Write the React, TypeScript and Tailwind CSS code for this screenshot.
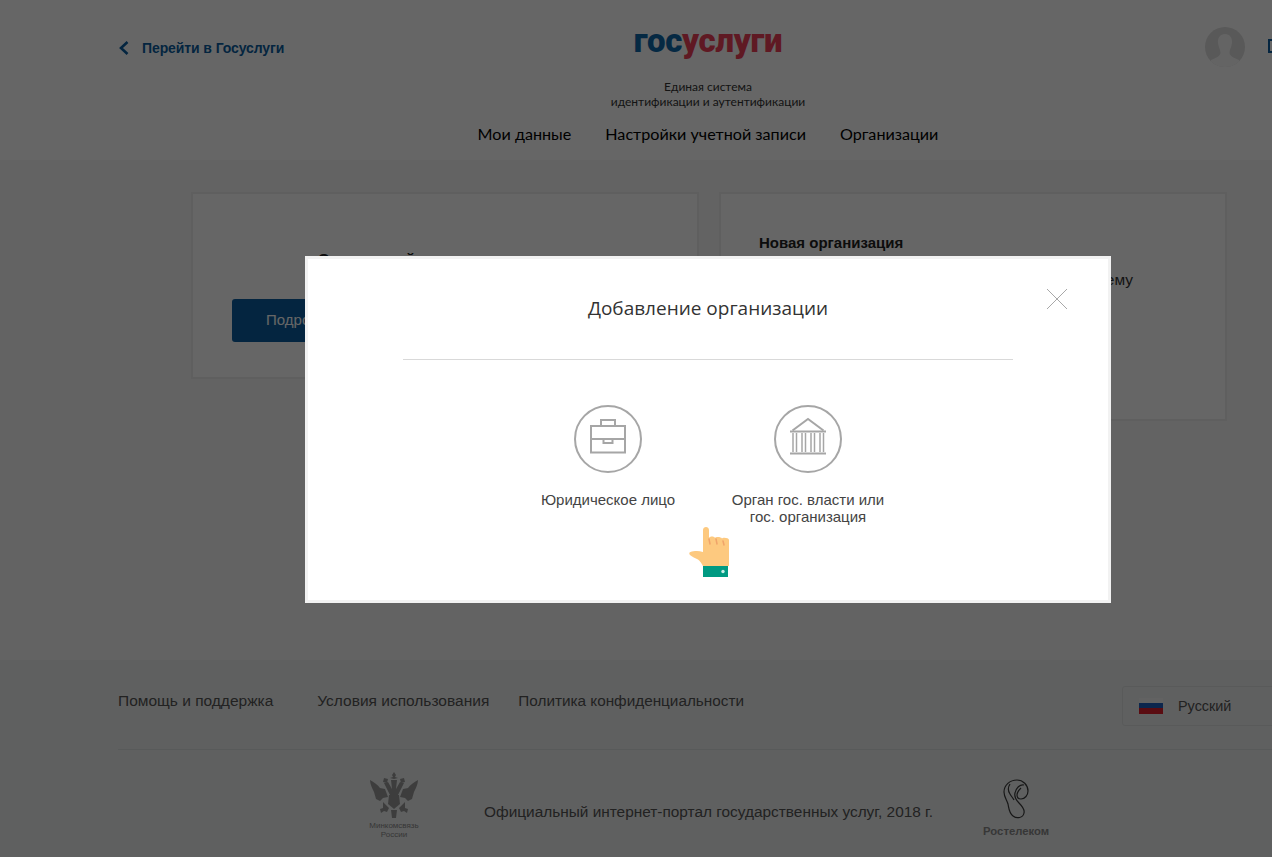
// gosuslugi profile page with the "add organization" dialog on top

function Avatar() {
  return (
    <svg width="40" height="40" viewBox="0 0 40 40">
      <defs>
        <clipPath id="avatar-clip">
          <circle cx="20" cy="20" r="20" />
        </clipPath>
      </defs>
      <circle cx="20" cy="20" r="20" fill="#dedede" />
      <g clipPath="url(#avatar-clip)" fill="#fafafa">
        <path d="M20 7c-5 0-7.500 4-7 9 .3 4 2.500 6.500 2.500 10 0 3-5 5-9.500 7v7h28v-7c-4.500-2-9.500-4-9.500-7 0-3.500 2.200-6 2.500-10 .5-5-2-9-7-9z" />
      </g>
    </svg>
  )
}

function Briefcase() {
  return (
    <svg width="68" height="68" viewBox="0 0 68 68" fill="none" stroke="#a6a6a6" strokeWidth="2">
      <circle cx="34" cy="34" r="33" />
      <path d="M17 21h34v26.500H17z" />
      <path d="M27 21v-6h14v6" />
      <path d="M17 34h12M39 34h12" />
      <path d="M29.500 34h9v4h-9z" />
    </svg>
  )
}

function Building() {
  return (
    <svg width="68" height="68" viewBox="0 0 68 68" fill="none" stroke="#a6a6a6" strokeWidth="2">
      <circle cx="34" cy="34" r="33" />
      <path d="M18.500 25.500L34 14l15.500 11.500" />
      <path d="M16 26.500h36" />
      <path d="M16 48.500h36" strokeWidth="2.200" />
      <path d="M19 28v19M22.500 28v19M28 28v19M31.500 28v19M37 28v19M40.500 28v19M46 28v19M49.500 28v19" strokeWidth="1.500" />
    </svg>
  )
}

function Hand() {
  return (
    <svg width="42" height="50" viewBox="0 0 42 50">
      <path
        d="M15 3c0-4 6-4 6 0v8c.5-2 5.500-2 6 0 .5-1.500 6-1.500 7 .5.500-1.500 7-1 7 1.500V39H15c-1.500-3-3-5-5-6.500-2.500-1.500-6-2.500-8-4.500-1-1-1-2.500.5-3 3-1 8-1.500 12.500 0z"
        fill="#fdc97f"
      />
      <path d="M21 12l1 5M28 12l1 5M35 14l1 4" stroke="#f0a46a" strokeWidth="1.500" strokeLinecap="round" />
      <rect x="15" y="39" width="25" height="11" fill="#009a82" />
      <circle cx="35" cy="44.500" r="1.700" fill="#c8ece6" />
    </svg>
  )
}

function Eagle() {
  return (
    <svg width="50" height="46" viewBox="0 0 50 46" fill="#9a9a9a">
      <path d="M25 0l2 3-1 2 3 1-4 1-4-1 3-1-1-2z" />
      <path d="M15 6l4 1-1 4-4-1zM35 6l-4 1 1 4 4-1z" />
      <path d="M22 8h6l-1 9 4-7 4 1-6 12h-8l-6-12 4-1 4 7z" />
      <path d="M1 8c4 2 8 5 10 8l5 1 3 8-5 1-3 3-4-2-2-7C3 16 1 12 1 8z" />
      <path d="M49 8c-4 2-8 5-10 8l-5 1-3 8 5 1 3 3 4-2 2-7c2-4 4-8 4-12z" />
      <path d="M20 23h10l1 9-6 5-6-5z" />
      <path d="M14 30l6 6-2 4-3-1-3 2-1-4 3-1zM36 30l-6 6 2 4 3-1 3 2 1-4-3-1z" />
      <path d="M22 38h6l-1 8h-4z" />
    </svg>
  )
}

function RtLogo() {
  return (
    <svg width="26" height="40" viewBox="0 0 26 40" fill="none" stroke="#3a3a3a" strokeWidth="1.200">
      <path d="M14 1C7 1 1 6 1 13c0 5 3 8 4 12 1 5 1 9 5 12 4 3 10 2 11-3 1-4-2-7-5-10-3-3-5-6-4-10 1-5 5-9 9-8" />
      <path d="M14 1c6 0 11 5 11 11 0 4-3 8-7 8-3 0-4-2-4-4 0-3 2-5 4-7" />
      <path d="M7 5c-2 3-2 7 0 10 1 2 3 4 4 6" />
    </svg>
  )
}

const font = { fontFamily: '"Liberation Sans", Arial, sans-serif' }

export default function App() {
  return (
    <div className="relative w-[1272px] h-[857px] overflow-hidden bg-white" style={font}>
      <div className="w-[1416px]">
        {/* header */}
        <header className="h-[160px] px-[118px] grid grid-cols-[1fr_480px_1fr] bg-white">
          <a className="flex items-center h-4 mt-[40px] text-[14px] tracking-[-0.1px] font-bold text-[#0b5ea0]">
            <svg className="ml-px mr-[13px]" width="10" height="14" viewBox="0 0 10 14" fill="none" stroke="#0b5ea0" strokeWidth="2.600">
              <path d="M8.500 1L2 7l6.500 6" />
            </svg>
            Перейти в Госуслуги
          </a>

          <div className="flex flex-col items-center font-['Lato','Open_Sans',sans-serif]">
            <div className="mt-[19px] h-[50px] text-[33px] leading-[44px] font-black tracking-[-0.3px] font-['Roboto',sans-serif]">
              <span className="text-[#0d66a8]">гос</span>
              <span className="text-[#ee3f58]">услуги</span>
            </div>
            <div className="mt-[10px] text-[12px] leading-[15px] text-center text-[#333]">
              Единая система
              <br />
              идентификации и аутентификации
            </div>
            <nav className="mt-[15px] flex gap-[34px] text-[16.150px] leading-[20px] whitespace-nowrap text-black">
              <a>Мои данные</a>
              <a>Настройки учетной записи</a>
              <a>Организации</a>
            </nav>
          </div>

          <div className="flex justify-end items-start pt-[27px] gap-[23px]">
            <Avatar />
            <div className="mt-[12px] w-[30px] h-[14px] border-2 border-[#0b5ea0]" />
          </div>
        </header>

        {/* cards */}
        <main className="h-[500px] bg-[#f8f8f8] pt-[32px] pl-[191px] flex items-start gap-[20px]">
          <section className="w-[508px] h-[187px] bg-white border-2 border-[#eeeeee] pt-[55px] pl-[39px]">
            <div className="ml-[86px] text-[15px] leading-[20px] font-bold text-[#222]">Организаций</div>
            <button className="mt-[30px] h-[43px] pl-[34px] w-[424px] text-left rounded-[3px] bg-[#0b5ea0] text-white text-[15px]">
              Подробнее
            </button>
          </section>
          <section className="w-[508px] h-[229px] bg-white border-2 border-[#eeeeee] pt-[39px] pl-[38px]">
            <h3 className="text-[15px] leading-[20px] font-bold text-[#222]">Новая организация</h3>
            <p className="mt-[17px] w-[374px] text-right text-[15.500px] leading-[20px] whitespace-nowrap text-[#333]">
              Добавьте новую организацию в систему
            </p>
          </section>
        </main>

        {/* footer */}
        <footer className="h-[197px] bg-[#edf0f0] px-[118px]">
          <div className="h-[90px] flex items-start border-b border-[#dde0e0] pt-[31px] text-[15.500px] leading-[20px] text-[#555]">
            <a>Помощь и поддержка</a>
            <a className="ml-[44px]">Условия использования</a>
            <a className="ml-[29px] text-[15.300px]">Политика конфиденциальности</a>
            <div className="ml-auto -mt-[5px] w-[176px] h-[40px] flex items-center pl-4 border border-[#dfe2e2] rounded-[3px] text-[14.400px]">
              <div className="w-6 h-4 flex flex-col mr-[15px]">
                <div className="h-[5px] bg-[#f4f4f4]" />
                <div className="h-[5px] bg-[#1f5fc0]" />
                <div className="h-[6px] bg-[#e0202c]" />
              </div>
              Русский
            </div>
          </div>
          <div className="flex items-start pt-[22px] pl-[246px]">
            <div className="w-[60px] flex flex-col items-center text-[8px] leading-[9px] text-[#8a8a8a] text-center">
              <Eagle />
              <span className="mt-[3px] whitespace-nowrap">Минкомсвязь</span>
              <span>России</span>
            </div>
            <p className="ml-[60px] mt-[30px] text-[15.400px] leading-[20px] text-[#555] whitespace-nowrap">
              Официальный интернет-портал государственных услуг, 2018 г.
            </p>
            <div className="ml-[50px] w-[66px] flex flex-col items-center text-[11.300px] leading-[14px] font-bold text-[#8a8a8a]">
              <div className="mt-[7px]">
                <RtLogo />
              </div>
              <span className="mt-[5px]">Ростелеком</span>
            </div>
          </div>
        </footer>
      </div>

      {/* backdrop */}
      <div className="absolute inset-0 bg-black/60" />

      {/* dialog */}
      <div className="absolute left-[305px] top-[256px] w-[806px] h-[347px] bg-white border-[3px] border-[#f2f2f2] flex flex-col items-center">
        <svg className="absolute left-[739px] top-[30px]" width="20" height="20" viewBox="0 0 20 20" stroke="#a8a8a8" strokeWidth="1">
          <path d="M0 0l20 20M20 0L0 20" />
        </svg>
        <h2 className="mt-[36px] h-[27px] text-[19px] leading-[27px] text-[#333] font-['Open_Sans',sans-serif]">Добавление организации</h2>
        <div className="mt-[37px] w-[610px] h-px bg-[#d9d9d9]" />
        <div className="mt-[45px] grid grid-cols-[200px_200px] text-[15px] leading-[17px] text-center text-[#444]">
          <div className="flex flex-col items-center">
            <Briefcase />
            <span className="mt-[18px]">Юридическое лицо</span>
          </div>
          <div className="flex flex-col items-center">
            <Building />
            <span className="mt-[18px] whitespace-nowrap">
              Орган гос. власти или
              <br />
              гос. организация
            </span>
          </div>
        </div>
        <div className="absolute left-[380px] top-[268px]">
          <Hand />
        </div>
      </div>
    </div>
  )
}
